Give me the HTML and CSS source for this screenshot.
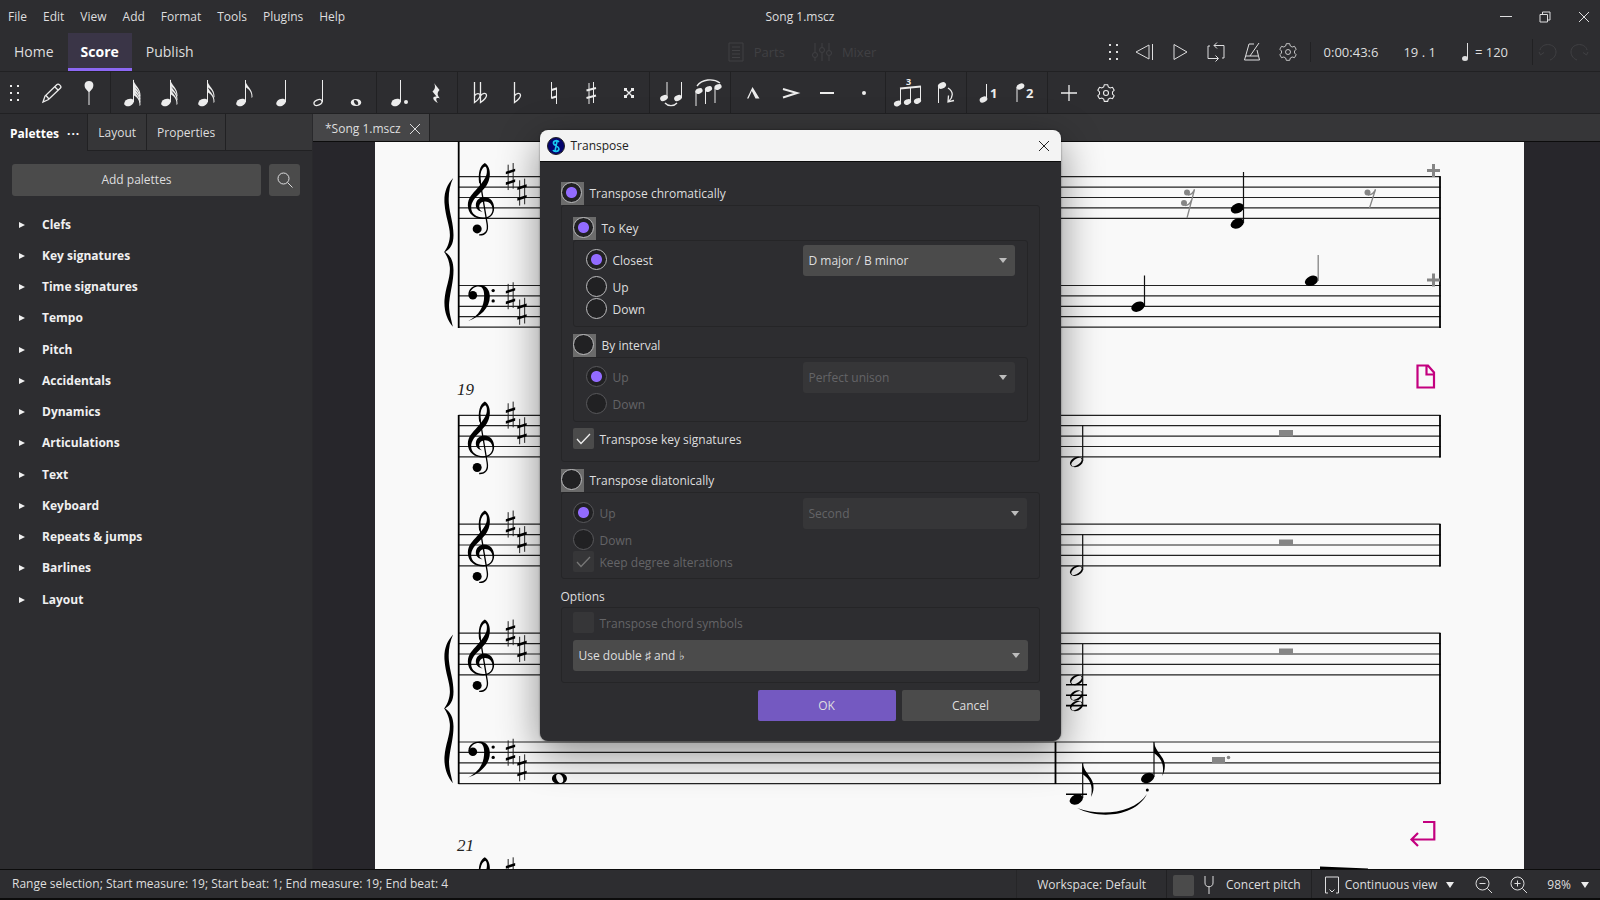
FILE: index.html
```html
<!DOCTYPE html>
<html lang="en">

<head>
    <meta charset="UTF-8">
    <meta name="viewport" content="width=device-width, initial-scale=1.0">
    <title>Song 1.mscz</title>
    <link rel="stylesheet" href="styles.css">
</head>

<body>
    <!-- Shared shapes -->
    <svg class="defs" aria-hidden="true">
        <defs>
            <ellipse id="head" rx="5" ry="3.5" transform="rotate(-24)" />
            <ellipse id="big-head" rx="6.9" ry="4.8" transform="rotate(-24)" />
            <path id="half-head" transform="rotate(-24)" fill-rule="evenodd" d="M-6.800 0A6.800 4.800 0 1 1 6.800 0A6.800 4.800 0 1 1-6.800 0ZM-5.700 1.300A5.900 2.700-12 1 1 5.700-1.300A5.900 2.700-12 1 1-5.700 1.300Z" />
            <path id="flag" d="M0 0C1 6 8 9 7.500 17L6.500 18C7 12 4 9 0 7Z" />
            <path id="big-flag" d="M0 0C2 11 12 15 11 25C11 28 10 31 8.500 34C11 22 7 16 0 11Z" />
            <path id="gear" d="M9 2h4l.8 2.800 2.200 1.200 2.800-.8 2 3.500-2 2.100v2.400l2 2.100-2 3.500-2.800-.8-2.200 1.200L13 22H9l-.8-2.800L6 18l-2.800.8-2-3.500 2-2.100v-2.400l-2-2.100 2-3.500L6 6l2.200-1.200Z" />
            <g id="sharp" transform="scale(.3333)">
                <path d="M-7-36V40M8-41V36" fill="none" stroke="#222" stroke-width="3" />
                <path d="M-14-15L14-24V-16L-14-7ZM-14 17L14 8V16L-14 25Z" />
            </g>
            <g id="treble" transform="scale(.3333) translate(-86 -204)">
                <path d="M165 69C177 76 181 92 180 106C178 130 166 144 152 158C136 174 124 186 124 203C124 222 140 233 160 233C178 233 188 222 188 208C188 194 178 185 166 185C152 185 146 196 149 206C150 211 154 214 158 216C146 214 138 206 138 196C138 180 150 171 164 171C182 171 193 186 193 204C193 224 180 237 160 237C134 237 114 222 114 196C114 174 128 162 142 146C158 128 170 112 171 98C172 88 170 82 166 80C160 82 154 90 152 104L153 128L148 130C144 100 150 76 165 69Z" />
                <path d="M150 120L172 252C176 274 166 286 148 285" fill="none" stroke="#000" stroke-width="4" />
                <circle cx="142" cy="267" r="13.500" />
            </g>
            <g id="bass" transform="scale(.3333) translate(-86 -468)">
                <path d="M116 466C114 446 130 435 150 435C170 436 180 450 180 470C180 505 150 532 115 543C148 526 163 500 163 468C163 450 158 440 146 440C134 440 124 448 121 458Z" />
                <circle cx="129" cy="466" r="13" />
                <circle cx="190" cy="452" r="5" />
                <circle cx="190" cy="483" r="5" />
            </g>
            <path id="brace" transform="scale(.3333) translate(-86 -110)" d="M70 114C50 135 42 160 44 190C47 235 62 260 60 290C58 312 50 326 43 336C50 346 58 360 60 382C62 415 47 440 44 480C42 512 52 540 69 560C62 530 56 510 58 488C62 450 71 425 71 390C71 360 60 345 46 336C60 327 71 315 71 285C71 250 60 225 57 190C55 160 60 135 70 114Z" />
            <path id="staff" d="M0 0H982M0 10.400H982M0 20.800H982M0 31.200H982M0 41.600H982" fill="none" stroke="#222" stroke-width="1.2" />
            <g id="treble-staff">
                <use href="#staff" /><use href="#treble" y="31.200" /><use href="#sharp" x="52" y="0" /><use href="#sharp" x="63.500" y="15.600" />
            </g>
            <g id="bass-staff">
                <use href="#staff" /><use href="#bass" y="10.400" /><use href="#sharp" x="52" y="10.400" /><use href="#sharp" x="63.500" y="26" />
            </g>
        </defs>
    </svg>

    <div class="app">
        <header class="titlebar">
            <nav class="menu">
                <button>File</button>
                <button>Edit</button>
                <button>View</button>
                <button>Add</button>
                <button>Format</button>
                <button>Tools</button>
                <button>Plugins</button>
                <button>Help</button>
            </nav>
            <div class="doc-title">Song 1.mscz</div>
            <div class="window-buttons">
                <button aria-label="Minimize"><svg width="12" height="12" viewBox="0 0 12 12"><path d="M0 5.500H12" /></svg></button>
                <button aria-label="Restore"><svg width="12" height="12" viewBox="0 0 12 12"><path d="M1 3.500H8.500V11H1ZM3.500 3V1H11V9H9" /></svg></button>
                <button aria-label="Close"><svg width="12" height="12" viewBox="0 0 12 12"><path d="M1 1L11 11M11 1L1 11" /></svg></button>
            </div>
        </header>

        <div class="main-nav">
            <nav class="pages">
                <a href="#">Home</a>
                <a href="#" class="active">Score</a>
                <a href="#">Publish</a>
            </nav>
            <div class="panels">
                <button disabled>
                    <svg width="16" height="20" viewBox="0 0 16 20"><path d="M1 1H15V19H1ZM4 5H12M4 8.500H12M4 12H12M4 15.500H12" /></svg>
                    Parts
                </button>
                <button disabled>
                    <svg width="20" height="20" viewBox="0 0 20 20"><path d="M3 1V10M3 16V19M10 1V5M10 11V19M17 1V8M17 14V19" /><circle cx="3" cy="13" r="2.500" /><circle cx="10" cy="8" r="2.500" /><circle cx="17" cy="11" r="2.500" /></svg>
                    Mixer
                </button>
            </div>
            <div class="playback">
                <button class="grip" aria-label="Move toolbar"><svg width="12" height="18" viewBox="0 0 12 18"><path class="fill" d="M1 1h2v2h-2zM8 1h2v2h-2zM1 8h2v2h-2zM8 8h2v2h-2zM1 15h2v2h-2zM8 15h2v2h-2z" /></svg></button>
                <button aria-label="Rewind"><svg width="20" height="20" viewBox="0 0 20 20"><path d="M15 3V17L2 10ZM18.500 2V18" /></svg></button>
                <button aria-label="Play"><svg width="20" height="20" viewBox="0 0 20 20"><path d="M4 2.500V17.500L17 10Z" /></svg></button>
                <button aria-label="Loop"><svg width="20" height="20" viewBox="0 0 20 20"><path d="M8 3.500H18V16H16M12 16.500H2V4H4M11 .5L8 3.500L11 6.500M9.500 13.500L12.500 16.500L9.500 19.500" /></svg></button>
                <button aria-label="Metronome"><svg width="20" height="20" viewBox="0 0 20 20"><path d="M12 2H7L2.500 18H17.500L15 8M17 1L8 14M4 14H16" /></svg></button>
                <button aria-label="Playback settings"><svg width="20" height="20" viewBox="0 0 22 24"><use href="#gear" /><circle cx="11" cy="12" r="3" /></svg></button>
                <span class="time">0:00:43:6</span>
                <span class="beat">19 . 1</span>
                <span class="tempo"><svg width="8" height="20" viewBox="0 0 8 20"><path d="M6.500 1V16" /><ellipse class="fill" cx="4" cy="16.500" rx="3" ry="2.500" /></svg>= 120</span>
                <button disabled class="first-undo" aria-label="Undo"><svg width="20" height="20" viewBox="0 0 20 20"><path d="M2 8C4 0 18 1 18 10C18 14 15 17 12 18M1 10L2.500 13L6 10.500" /></svg></button>
                <button disabled aria-label="Redo"><svg width="20" height="20" viewBox="0 0 20 20"><path d="M18 8C16 0 2 1 2 10C2 14 5 17 8 18M19 10L17.500 13L14 10.500" /></svg></button>
            </div>
        </div>

        <div class="note-toolbar">
            <div class="group">
                <button class="grip" aria-label="Move toolbar"><svg width="12" height="18" viewBox="0 0 12 18"><path class="fill" d="M1 1h2v2h-2zM8 1h2v2h-2zM1 8h2v2h-2zM8 8h2v2h-2zM1 15h2v2h-2zM8 15h2v2h-2z" /></svg></button>
                <button aria-label="Note input"><svg width="30" height="30" viewBox="0 0 30 30"><path class="line" d="M6 24L8 18L20 6.500C21.500 5 25 8.500 23.500 10L11.500 21.500ZM9 17.500L12 21M18 9L21.500 12.500" /></svg></button>
                <button aria-label="Insert"><svg width="30" height="30" viewBox="0 0 30 30"><path class="fill" d="M15 3C20 3 20 8 18.500 10.500L15.500 14V27H14.500V14L11.500 10.500C10 8 10 3 15 3Z" /></svg></button>
            </div>
            <div class="group">
                <button aria-label="64th note"><svg width="30" height="30" viewBox="0 0 30 30"><use href="#head" x="11" y="24.500" /><path class="stem" d="M15.500 2V24" /><use href="#flag" x="15" y="1" /><use href="#flag" x="15" y="4" /><use href="#flag" x="15" y="7" /><use href="#flag" x="15" y="10" /></svg></button>
                <button aria-label="32nd note"><svg width="30" height="30" viewBox="0 0 30 30"><use href="#head" x="11" y="24.500" /><path class="stem" d="M15.500 2V24" /><use href="#flag" x="15" y="1" /><use href="#flag" x="15" y="5" /><use href="#flag" x="15" y="9" /></svg></button>
                <button aria-label="16th note"><svg width="30" height="30" viewBox="0 0 30 30"><use href="#head" x="11" y="24.500" /><path class="stem" d="M15.500 2V24" /><use href="#flag" x="15" y="2" /><use href="#flag" x="15" y="7" /></svg></button>
                <button aria-label="Eighth note"><svg width="30" height="30" viewBox="0 0 30 30"><use href="#head" x="12" y="24.500" /><path class="stem" d="M16.500 2V24" /><use href="#flag" x="16" y="2" /></svg></button>
                <button aria-label="Quarter note"><svg width="30" height="30" viewBox="0 0 30 30"><use href="#head" x="15" y="24.500" /><path class="stem" d="M19.500 2V24" /></svg></button>
                <button aria-label="Half note"><svg width="30" height="30" viewBox="0 0 30 30"><ellipse class="line" cx="15" cy="24.500" rx="4.200" ry="2.600" transform="rotate(-24 15 24.500)" /><path class="stem" d="M19.500 2V24" /></svg></button>
                <button aria-label="Whole note"><svg width="30" height="30" viewBox="0 0 30 30"><path class="fill" fill-rule="evenodd" d="M16 21C23 21 23 28 16 28C9 28 9 21 16 21ZM15 22C12.500 22 14.500 27 17 27C19.500 27 18 22 15 22Z" /></svg></button>
            </div>
            <div class="group">
                <button aria-label="Dotted note"><svg width="30" height="30" viewBox="0 0 30 30"><use href="#head" x="12" y="24.500" /><path class="stem" d="M16.500 2V24" /><circle class="fill" cx="22" cy="24" r="2" /></svg></button>
                <button aria-label="Rest"><svg width="30" height="30" viewBox="0 0 30 30"><path class="fill" d="M13 5L18.500 12C16 15 16 17 19 20.500C15 19 14 21 17 25C11 22 11 18 15.500 18.500L11.500 13.500C14.500 11 14.500 8 13 5Z" /></svg></button>
            </div>
            <div class="group">
                <button aria-label="Double flat"><svg width="30" height="30" viewBox="0 0 30 30"><path class="line" d="M9.500 4V24.500C13 22 15 20 15 17.500C15 15 11 15 9.500 18M15.500 4V24.500C19 22 21.500 20 21.500 17.500C21.500 14 17 15 15.500 18" /></svg></button>
                <button aria-label="Flat"><svg width="30" height="30" viewBox="0 0 30 30"><path class="line" d="M12.500 4V24.500C16 22 18.500 20 18.500 17.500C18.500 14 14 15 12.500 18" /></svg></button>
                <button aria-label="Natural"><svg width="30" height="30" viewBox="0 0 30 30"><path class="stem" d="M12.500 4V20.500M17.500 9.500V26" /><path class="thick" d="M12.500 12L17.500 10.500M12.500 20L17.500 18.500" /></svg></button>
                <button aria-label="Sharp"><svg width="30" height="30" viewBox="0 0 30 30"><path class="stem" d="M13 5V26M17.500 4V25" /><path class="thick" d="M10.500 12.500L20 10M10.500 20L20 17.500" /></svg></button>
                <button aria-label="Double sharp"><svg width="30" height="30" viewBox="0 0 30 30"><path class="line" d="M12 11L20 19M20 11L12 19" /><path class="fill" d="M11 10h3v3h-3zM18 10h3v3h-3zM11 17h3v3h-3zM18 17h3v3h-3z" /></svg></button>
            </div>
            <div class="group">
                <button aria-label="Tie"><svg width="30" height="30" viewBox="0 0 30 30"><use href="#head" transform="translate(7 20) scale(.8)" /><use href="#head" transform="translate(21 20) scale(.8)" /><path class="stem" d="M10 4V20M24.500 4V20" /><path class="line" d="M8 25C11 28.500 17 28.500 20 25" /></svg></button>
                <button aria-label="Slur"><svg width="30" height="30" viewBox="0 0 30 30"><use href="#head" transform="translate(5 13) scale(.75)" /><use href="#head" transform="translate(14.500 11) scale(.75)" /><use href="#head" transform="translate(24 9) scale(.75)" /><path class="stem" d="M2 13V28M11.500 12V26M21 10V25" /><path class="line" d="M3 8C8 1 19 0 26 5" /></svg></button>
            </div>
            <div class="group">
                <button aria-label="Marcato"><svg width="30" height="30" viewBox="0 0 30 30"><path class="fill" d="M14.500 9L21.500 20.500H17.500L13.800 13L10.500 20.500H9Z" /></svg></button>
                <button aria-label="Accent"><svg width="30" height="30" viewBox="0 0 30 30"><path class="thick" d="M8 11L22 15L8 19.500" /></svg></button>
                <button aria-label="Tenuto"><svg width="30" height="30" viewBox="0 0 30 30"><path class="thick" d="M8 15H22" /></svg></button>
                <button aria-label="Staccato"><svg width="30" height="30" viewBox="0 0 30 30"><circle class="fill" cx="15" cy="15" r="2" /></svg></button>
            </div>
            <div class="group">
                <button aria-label="Tuplet"><svg width="30" height="34" viewBox="0 -4 30 34"><use href="#head" transform="translate(4.500 23.500) scale(.75)" /><use href="#head" transform="translate(14.500 22) scale(.75)" /><use href="#head" transform="translate(24.500 21) scale(.75)" /><path class="stem" d="M7.500 8V23M17.500 8V22M27.500 7V21" /><path class="thick" d="M7 8.500L28 6.500" /><text x="13" y="5">3</text></svg></button>
                <button aria-label="Flip direction"><svg width="30" height="30" viewBox="0 0 30 30"><use href="#head" transform="translate(12 7.500) scale(.85)" /><path class="stem" d="M8.500 8V25" /><path class="line" d="M18 10C24 14 23 19 19 23M18.500 17.500L18 24L24 22.500" /></svg></button>
            </div>
            <div class="group">
                <button aria-label="Voice 1"><svg width="30" height="30" viewBox="0 0 30 30"><use href="#head" transform="translate(9.500 21.500) scale(.8)" /><path class="stem" d="M12.500 6V21" /><text class="voice" x="16" y="20">1</text></svg></button>
                <button aria-label="Voice 2"><svg width="30" height="30" viewBox="0 0 30 30"><use href="#head" transform="translate(9.500 8.500) scale(.8)" /><path class="stem" d="M6 9V24" /><text class="voice" x="15" y="20">2</text></svg></button>
            </div>
            <div class="group last">
                <button aria-label="Add"><svg width="30" height="30" viewBox="0 0 30 30"><path class="line" d="M7 15H23M15 7V23" /></svg></button>
                <button aria-label="Toolbar settings"><svg width="20" height="20" viewBox="0 0 22 24"><g class="line"><use href="#gear" /><circle cx="11" cy="12" r="3" /></g></svg></button>
            </div>
        </div>

        <div class="workspace">
            <aside class="sidebar">
                <div class="side-tabs">
                    <button class="active">Palettes <span class="dots">···</span></button>
                    <button>Layout</button>
                    <button>Properties</button>
                </div>
                <div class="palette-actions">
                    <button class="add">Add palettes</button>
                    <button aria-label="Search"><svg width="16" height="16" viewBox="0 0 16 16"><circle cx="6.500" cy="6.500" r="5.500" /><path d="M10.500 10.500L15.500 15.500" /></svg></button>
                </div>
                <ul class="palettes">
                    <li>Clefs</li>
                    <li>Key signatures</li>
                    <li>Time signatures</li>
                    <li>Tempo</li>
                    <li>Pitch</li>
                    <li>Accidentals</li>
                    <li>Dynamics</li>
                    <li>Articulations</li>
                    <li>Text</li>
                    <li>Keyboard</li>
                    <li>Repeats &amp; jumps</li>
                    <li>Barlines</li>
                    <li>Layout</li>
                </ul>
            </aside>

            <main class="editor">
                <div class="doc-tabs">
                    <div class="doc-tab">*Song 1.mscz
                        <button aria-label="Close tab"><svg width="12" height="12" viewBox="0 0 12 12"><path d="M1 1L11 11M11 1L1 11" /></svg></button>
                    </div>
                </div>
                <div class="canvas">
                    <svg class="score" viewBox="375 142 1149 727" preserveAspectRatio="xMinYMin slice" role="img" aria-label="Score page">
                        <!-- first system -->
                        <use href="#treble-staff" x="458.500" y="176.700" />
                        <use href="#bass-staff" x="458.500" y="285.500" />
                        <use href="#brace" x="458.500" y="176.700" />
                        <path class="bar" d="M458.700 142V328M1440 176.200V328" />
                        <g class="gray">
                            <circle cx="1187" cy="192.500" r="3" />
                            <circle cx="1184" cy="203" r="3" />
                            <path class="gray-line" d="M1194.500 189.500L1187 218M1188 195C1191 195 1193 193 1194.500 189.500M1185 205.500C1188 205.500 1190 204 1191.500 200" />
                            <circle cx="1367.500" cy="192.500" r="3" />
                            <path class="gray-line" d="M1375.500 189.500L1369.500 208M1368 195C1371 195 1374 193 1375.500 189.500" />
                            <path d="M1432 164h3v5h5v3h-5v5h-3v-5h-5v-3h5zM1432 273.500h3v5h5v3h-5v5h-3v-5h-5v-3h5z" />
                        </g>
                        <use href="#big-head" x="1237.300" y="208.300" />
                        <use href="#big-head" x="1237.300" y="223.500" />
                        <path class="stem-dark" d="M1243.500 172V223M1144.500 275.500V306" />
                        <use href="#big-head" x="1138" y="306.700" />
                        <use href="#big-head" x="1311.500" y="280.800" />
                        <path class="gray-line" d="M1318.200 255V281" />
                        <path class="break" d="M1417.500 365.500H1428L1434 372.500V387.500H1417.500ZM1426.500 365.500V374.500H1434" />

                        <!-- second system -->
                        <text class="measure" x="457" y="395">19</text>
                        <use href="#treble-staff" x="458.500" y="415.300" />
                        <use href="#treble-staff" x="458.500" y="524.200" />
                        <use href="#treble-staff" x="458.500" y="633.200" />
                        <use href="#bass-staff" x="458.500" y="742" />
                        <use href="#brace" x="458.500" y="633.200" />
                        <path class="bar" d="M458.700 415V784M1440 415V457.500M1440 524V566.500M1440 633V784M1055.500 742V784" />
                        <path fill-rule="evenodd" d="M559.500 773C569.500 773 569.500 784 559.500 784C549.500 784 549.500 773 559.500 773ZM558 774C554 774.500 557 783.500 561 783C565.500 782.500 563 773.500 558 774Z" />
                        <use href="#half-head" x="1076.500" y="462" />
                        <use href="#half-head" x="1076.500" y="570.700" />
                        <use href="#half-head" x="1076.500" y="680" />
                        <use href="#half-head" x="1076.500" y="695.500" />
                        <use href="#half-head" x="1076.500" y="706" />
                        <path class="stem-dark" d="M1082.700 425.500V461M1082.700 534.500V570M1082.700 644V705M1082.700 763V798M1154 742V777" />
                        <path class="ledger" d="M1066 684.800H1087M1066 695.300H1087M1066 705.600H1087M1066 794.200H1087" />
                        <path class="gray" d="M1279 430h14v6.500h-14zM1279 539.500h14v6h-14zM1279 648.500h14v6h-14zM1212 757h13v6h-13z" />
                        <circle class="gray" cx="1228.500" cy="757.500" r="1.800" />
                        <use href="#big-head" x="1076.300" y="799.500" />
                        <use href="#big-head" x="1147.600" y="778" />
                        <use href="#big-flag" x="1082.500" y="763" />
                        <use href="#big-flag" x="1153.800" y="742" />
                        <circle cx="1147.300" cy="790" r="1.500" />
                        <path d="M1077 808C1102 817 1134 813 1147 794C1136 816 1100 820 1077 808Z" />
                        <path class="break" d="M1423 822H1434.300V839.500H1411.500M1418 833L1411.500 839.500L1418 846" />

                        <!-- top of the third system -->
                        <text class="measure" x="457" y="851">21</text>
                        <use href="#treble-staff" x="458.500" y="871" />
                        <path d="M1320 866.500L1368 868.500V870H1320Z" />
                    </svg>
                </div>
            </main>
        </div>

        <footer class="statusbar">
            <div class="selection">Range selection; Start measure: 19; Start beat: 1; End measure: 19; End beat: 4</div>
            <button class="workspace-name">Workspace: Default</button>
            <label class="concert">
                <input type="checkbox" class="check">
                <svg width="12" height="20" viewBox="0 0 12 20"><path d="M2 1V8C2 13 10 13 10 8V1M6 12V19" /></svg>
                Concert pitch
            </label>
            <button class="view-mode">
                <svg width="16" height="20" viewBox="0 0 16 20"><path d="M4 18H1.500V2H14.500V18H12M5.500 14.500L8 17L10.500 14.500" /></svg>
                Continuous view <span class="caret"></span>
            </button>
            <button class="zoom" aria-label="Zoom out"><svg width="18" height="18" viewBox="0 0 18 18"><circle cx="7.500" cy="7.500" r="6.500" /><path d="M12.500 12.500L17 17M4.500 7.500H10.500" /></svg></button>
            <button class="zoom" aria-label="Zoom in"><svg width="18" height="18" viewBox="0 0 18 18"><circle cx="7.500" cy="7.500" r="6.500" /><path d="M12.500 12.500L17 17M4.500 7.500H10.500M7.500 4.500V10.500" /></svg></button>
            <button class="percent">98% <span class="caret"></span></button>
        </footer>
    </div>

    <div class="overlay">
        <form class="dialog" role="dialog" aria-labelledby="dialog-title">
            <div class="dialog-title">
                <svg width="18" height="18" viewBox="0 0 18 18"><circle cx="9" cy="9" r="8.500" fill="#04046e" /><path d="M12 5C10 2.500 6 4 6.500 6.500C7 9 12 9 12 12C11.500 15 7 15 6 13M10 4.500L8 14" fill="none" stroke="#18c6f0" stroke-width="1.600" /></svg>
                <span id="dialog-title">Transpose</span>
                <button type="button" aria-label="Close"><svg width="12" height="12" viewBox="0 0 12 12"><path d="M1 1L11 11M11 1L1 11" /></svg></button>
            </div>
            <div class="dialog-body">
                <label class="group-head"><span class="square"><input type="radio" name="mode" checked></span>Transpose chromatically</label>
                <div class="frame outer">
                    <label class="group-head"><span class="square"><input type="radio" name="chromatic" checked></span>To Key</label>
                    <div class="frame">
                        <div class="choices">
                            <label><input type="radio" name="key-dir" checked>Closest</label>
                            <label><input type="radio" name="key-dir">Up</label>
                            <label class="tight"><input type="radio" name="key-dir">Down</label>
                        </div>
                        <div class="select">
                            <select aria-label="Key">
                                <option>D major / B minor</option>
                            </select>
                        </div>
                    </div>
                    <label class="group-head spaced"><span class="square"><input type="radio" name="chromatic"></span>By interval</label>
                    <div class="frame">
                        <div class="choices">
                            <label><input type="radio" name="interval-dir" checked disabled>Up</label>
                            <label><input type="radio" name="interval-dir" disabled>Down</label>
                        </div>
                        <div class="select">
                            <select aria-label="Interval" disabled>
                                <option>Perfect unison</option>
                            </select>
                        </div>
                    </div>
                    <label class="check-row key-check"><input type="checkbox" class="check" checked>Transpose key signatures</label>
                </div>

                <label class="group-head spaced"><span class="square"><input type="radio" name="mode"></span>Transpose diatonically</label>
                <div class="frame wide">
                    <div class="choices">
                        <label><input type="radio" name="diatonic-dir" checked disabled>Up</label>
                        <label><input type="radio" name="diatonic-dir" disabled>Down</label>
                        <label class="check-row tight"><input type="checkbox" class="check" checked disabled>Keep degree alterations</label>
                    </div>
                    <div class="select">
                        <select aria-label="Degree" disabled>
                            <option>Second</option>
                        </select>
                    </div>
                </div>

                <div class="options-title">Options</div>
                <div class="frame options">
                    <label class="check-row"><input type="checkbox" class="check" disabled>Transpose chord symbols</label>
                    <div class="select">
                        <select aria-label="Accidental spelling">
                            <option>Use double ♯ and ♭</option>
                        </select>
                    </div>
                </div>

                <div class="dialog-buttons">
                    <button type="button" class="primary">OK</button>
                    <button type="button">Cancel</button>
                </div>
            </div>
        </form>
    </div>
</body>

</html>
```

FILE: styles.css
```css
* {
    box-sizing: border-box;
}

body {
    margin: 0;
    background-color: #2d2d30;
    color: #dededf;
    font-family: "Open Sans", "Noto Sans", sans-serif;
    font-size: 12px;
    line-height: 20px;
}

button,
select,
input {
    margin: 0;
    padding: 0;
    font: inherit;
    color: inherit;
}

button {
    display: flex;
    align-items: center;
    justify-content: center;
    border: none;
    background: none;
    white-space: nowrap;
}

svg {
    flex: none;
    fill: none;
    stroke: currentColor;
}

.defs {
    position: absolute;
    width: 0;
    height: 0;
}

.app {
    display: flex;
    flex-direction: column;
    height: 100vh;
    overflow: hidden;
}

/* Title bar */
.titlebar {
    display: grid;
    grid-template-columns: 1fr auto 1fr;
    align-items: center;
    height: 33px;
    flex: none;
}

.menu {
    display: flex;
    gap: 16px;
    padding-left: 8px;
}

.window-buttons {
    display: flex;
    justify-content: flex-end;
    gap: 27px;
    padding-right: 10px;
}

/* Home / Score / Publish row */
.main-nav {
    display: grid;
    grid-template-columns: 1fr auto 1fr;
    height: 39px;
    flex: none;
    border-bottom: 1px solid #212123;
}

.pages {
    display: flex;
    font-size: 14px;
}

.pages a {
    display: flex;
    align-items: center;
    padding: 0 14px;
    color: inherit;
    text-decoration: none;
}

.pages a.active {
    background-color: #3a3547;
    border-bottom: 3px solid #8d68f5;
    padding: 3px 13px 0;
    color: #fff;
    font-weight: bold;
}

.panels {
    display: flex;
    gap: 27px;
    padding-left: 4px;
    font-size: 13px;
    color: #404043;
}

.panels button {
    gap: 10px;
}

.playback {
    display: flex;
    align-items: center;
    justify-content: flex-end;
    padding-right: 6px;
    font-size: 13px;
}

.playback button {
    width: 36px;
    height: 26px;
}

.playback .grip {
    width: 24px;
}

.time {
    margin-left: 4px;
    padding-left: 13px;
    border-left: 1px solid #212123;
}

.beat {
    padding: 0 25px;
}

.tempo {
    display: flex;
    align-items: center;
    gap: 6px;
    padding-right: 24px;
}

.playback button:disabled {
    width: 31px;
    color: #404043;
}

.playback .first-undo {
    width: 38px;
    border-left: 1px solid #212123;
}

.fill {
    fill: currentColor;
    stroke: none;
}

/* Note input toolbar */
.note-toolbar {
    display: flex;
    height: 42px;
    flex: none;
    border-bottom: 1px solid #212123;
    color: #ececec;
}

.group {
    display: flex;
    padding: 0 3px;
    border-right: 1px solid #212123;
}

.group:first-child {
    padding-left: 0;
}

.group.last {
    padding-left: 2px;
    border-right: none;
}

.group button {
    width: 37px;
}

.group .grip {
    width: 29px;
    margin-right: 4px;
}

.group svg {
    fill: currentColor;
    stroke: none;
}

.group .stem {
    fill: none;
    stroke: currentColor;
    stroke-width: 1;
}

.group .line {
    fill: none;
    stroke: currentColor;
    stroke-width: 1.3;
}

.group .thick {
    fill: none;
    stroke: currentColor;
    stroke-width: 2;
}

.group text {
    font-size: 9px;
    font-weight: bold;
}

.group .voice {
    font-size: 13px;
}

/* Sidebar */
.workspace {
    display: flex;
    flex: 1;
    min-height: 0;
}

.sidebar {
    width: 313px;
    flex: none;
    border-right: 1px solid #29292c;
}

.side-tabs {
    display: flex;
    height: 37px;
    background-color: #363638;
    border-bottom: 1px solid #212123;
}

.side-tabs button {
    padding: 2px 10px 0;
    border-right: 1px solid #212123;
}

.side-tabs .active {
    height: 37px;
    padding: 2px 7px 0 10px;
    background-color: #2d2d30;
    color: #fff;
    font-weight: bold;
}

.dots {
    margin-left: 8px;
    letter-spacing: 1px;
}

.palette-actions {
    display: flex;
    gap: 8px;
    padding: 13px 12px;
}

.palette-actions button {
    width: 31px;
    height: 32px;
    border-radius: 3px;
    background-color: #4b4b4b;
}

.palette-actions .add {
    flex: 1;
}

.palettes {
    display: grid;
    align-content: space-between;
    min-height: 406px;
    margin: 0;
    padding: 0;
    list-style: none;
    color: #f0f0f0;
    font-weight: bold;
}

.palettes li {
    display: flex;
    align-items: center;
    height: 31px;
    padding-left: 19px;
}

.palettes li::before {
    content: "";
    margin-right: 17px;
    border: 3px solid transparent;
    border-left: 6px solid #f0f0f0;
    border-right: none;
}

/* Score */
.editor {
    display: flex;
    flex-direction: column;
    flex: 1;
    min-width: 0;
}

.doc-tabs {
    display: flex;
    height: 28px;
    flex: none;
    background-color: #363638;
    border-bottom: 1px solid #0c0c0c;
}

.doc-tab {
    display: flex;
    align-items: center;
    gap: 8px;
    padding: 2px 8px 0 12px;
    background-color: #464648;
    border-right: 1px solid #212123;
}

.canvas {
    flex: 1;
    min-height: 0;
    padding: 0 76px 0 62px;
    background-color: #27262b;
}

.score {
    display: block;
    width: 100%;
    height: 100%;
    background-color: #f9f9f9;
    fill: #000;
    stroke: none;
}

.bar {
    stroke: #000;
    stroke-width: 1.8;
}

.stem-dark {
    stroke: #111;
    stroke-width: 1.2;
}

.ledger {
    stroke: #000;
    stroke-width: 1.6;
}

.gray {
    fill: #858585;
}

.gray-line {
    fill: none;
    stroke: #858585;
    stroke-width: 1.3;
}

.break {
    fill: none;
    stroke: #c3007f;
    stroke-width: 2.2;
}

.measure {
    fill: #222;
    font-family: "Liberation Serif", serif;
    font-size: 17px;
    font-style: italic;
}

/* Status bar */
.statusbar {
    display: flex;
    height: 31px;
    flex: none;
    border-top: 1px solid #0c0c0c;
    border-bottom: 2px solid #0c0c0c;
}

.selection {
    flex: 1;
    padding: 5px 12px;
}

.workspace-name {
    padding: 0 20px;
    border-left: 1px solid #262628;
    border-right: 1px solid #212123;
}

.concert {
    display: flex;
    align-items: center;
    padding: 0 10px 0 6px;
    border-right: 1px solid #212123;
}

.concert svg {
    margin: 0 11px 0 9px;
}

.view-mode {
    gap: 5px;
    padding: 0 8px 0 12px;
}

.caret {
    margin-left: 4px;
    border: 4px solid transparent;
    border-top: 6px solid #ececec;
    border-bottom: none;
}

.zoom {
    width: 35px;
}

.view-mode + .zoom {
    margin-left: 4px;
}

.percent {
    gap: 6px;
    padding: 0 11px;
}

.statusbar > * {
    padding-top: 2px;
    line-height: 24px;
}

/* Transpose dialog */
.overlay {
    position: absolute;
    inset: 0;
    display: flex;
    align-items: flex-start;
    justify-content: center;
    padding-top: 130px;
}

.dialog {
    width: 521px;
    border-radius: 8px;
    overflow: hidden;
    background-color: #2d2d30;
    box-shadow: 0 12px 40px rgba(0, 0, 0, 0.45), 0 0 2px rgba(0, 0, 0, 0.5);
}

.dialog-title {
    display: flex;
    align-items: center;
    gap: 6px;
    height: 32px;
    padding: 0 11px 0 7px;
    background-color: #f3f3f3;
    border-bottom: 1px solid #0c0c0c;
    color: #222;
}

.dialog-title button {
    margin-left: auto;
}

.dialog-body {
    padding: 20px 21px;
}

.dialog label {
    display: flex;
    align-items: center;
}

input[type="radio"] {
    appearance: none;
    width: 21px;
    height: 21px;
    border: 1px solid #bcbcbe;
    border-radius: 50%;
    background-color: #212123;
}

input[type="radio"]:checked {
    background-image: radial-gradient(circle, #926bff 5px, transparent 6px);
}

input[type="radio"]:disabled {
    border-color: #58585b;
}

.choices label:has(:disabled),
.check-row:has(:disabled) {
    color: #646467;
}

.square {
    display: flex;
    width: 23px;
    height: 23px;
    margin-right: 6px;
    background-color: #6b6b6b;
}

.spaced {
    margin-top: 7px;
}

.frame {
    display: grid;
    grid-template-columns: 1fr 212px;
    align-items: start;
    padding: 4px 12px 7px;
    border: 1px solid #252527;
    border-radius: 3px;
}

.frame.wide {
    grid-template-columns: 1fr 224px;
    padding: 5px 12px 6px 11px;
}

.frame.outer {
    display: block;
    padding: 11px 11px 12px;
}

.frame.options {
    display: block;
    padding: 4px 11px 11px;
}

.choices {
    padding-top: 4px;
}

.dialog .choices label,
.dialog .check-row {
    align-items: flex-end;
    height: 21px;
    line-height: 18px;
}

.choices label {
    gap: 6px;
    margin-top: 6px;
}

.choices label:first-child {
    margin-top: 0;
}

.choices .tight {
    margin-top: 1px;
}

.check {
    appearance: none;
    width: 21px;
    height: 21px;
    border-radius: 2px;
    background: #4b4b4b center no-repeat;
}

.check:checked {
    background-image: url("data:image/svg+xml,%3Csvg xmlns='http://www.w3.org/2000/svg' width='15' height='12'%3E%3Cpath d='M1 6L5 10.500L14 1' fill='none' stroke='%23eee' stroke-width='1.300'/%3E%3C/svg%3E");
}

.check:disabled {
    background-color: #363638;
}

.check:checked:disabled {
    background-image: url("data:image/svg+xml,%3Csvg xmlns='http://www.w3.org/2000/svg' width='15' height='12'%3E%3Cpath d='M1 6L5 10.500L14 1' fill='none' stroke='%23777' stroke-width='1.300'/%3E%3C/svg%3E");
}

.check-row {
    gap: 6px;
}

.key-check {
    margin-top: 6px;
}

.select {
    display: flex;
    align-items: center;
    position: relative;
}

.select::after {
    content: "";
    position: absolute;
    right: 8px;
    border: 4px solid transparent;
    border-top: 5px solid #bdbdbd;
    border-bottom: none;
    pointer-events: none;
}

select {
    appearance: none;
    width: 100%;
    height: 31px;
    padding: 1px 6px 0;
    border: none;
    border-radius: 3px;
    background-color: #4b4b4b;
}

select:disabled {
    background-color: #363638;
    color: #646467;
    opacity: 1;
}

.options-title {
    margin-top: 8px;
}

.options .select {
    margin-top: 7px;
}

.dialog-buttons {
    display: flex;
    justify-content: flex-end;
    gap: 6px;
    margin-top: 7px;
}

.dialog-buttons button {
    width: 138px;
    height: 31px;
    border-radius: 2px;
    background-color: #4b4b4b;
}

.dialog-buttons .primary {
    background-color: #7459c1;
}
```
